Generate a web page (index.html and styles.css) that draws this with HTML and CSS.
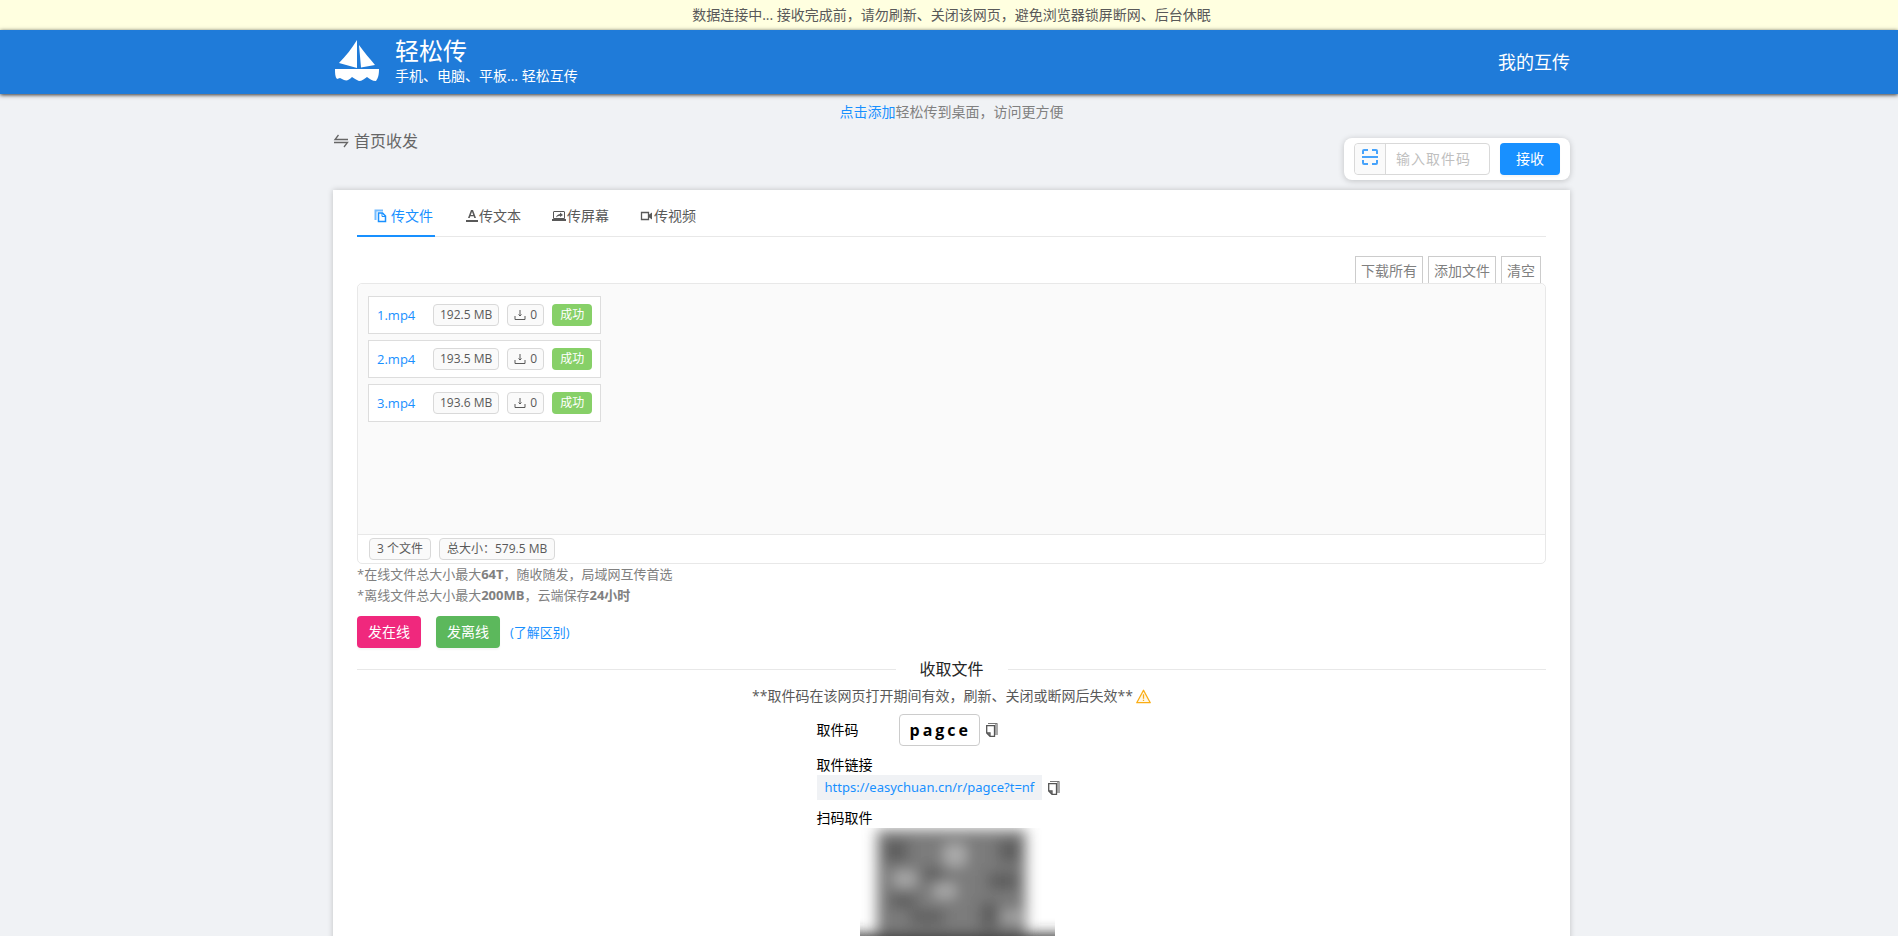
FILE: index.html
```html
<!DOCTYPE html>
<html lang="zh-CN">
<head>
<meta charset="utf-8">
<title>轻松传</title>
<link rel="stylesheet" href="styles.css">
</head>
<body>
<div class="banner">数据连接中... 接收完成前，请勿刷新、关闭该网页，避免浏览器锁屏断网、后台休眠</div>
<header class="header">
  <div class="container header-row">
    <a class="brand" href="#">
      <svg class="logo" viewBox="0 0 44 42" fill="#fff"><path d="M22 0V28L4 23C11 16 17 8 22 0ZM24 5C29 12 35 19 40 25L26 27.500ZM0 29H44C44 35 43 38 41 41C37 41 35 39 32 37C29 39 27 41 24 41C21 40 19 38 17 37C14 40 12 41 9 40L5 38L2 39C0 37 0 33 0 29Z"/></svg>
      <span class="brand-text"><span class="brand-name">轻松传</span><span class="brand-sub">手机、电脑、平板... 轻松互传</span></span>
    </a>
    <a class="mine" href="#">我的互传</a>
  </div>
</header>
<main class="main">
  <div class="container page">
    <p class="tip"><a href="#">点击添加</a>轻松传到桌面，访问更方便</p>
    <div class="top-row">
      <h1 class="page-title"><svg width="16" height="16" viewBox="0 0 16 16" fill="none" stroke="currentColor" stroke-width="1.300"><path d="M5.500 2L2 6.500H15M1 9.500H14.500L11 14"/></svg>首页收发</h1>
      <form class="pickup">
        <div class="pickup-group">
          <button class="scan" type="button" aria-label="扫码"><svg width="16" height="16" viewBox="0 0 16 16" fill="none" stroke="#47a3fb" stroke-width="2"><path d="M1 5V2Q1 1 2 1H6M10 1H14Q15 1 15 2V5M0 8H16M1 11V14Q1 15 2 15H6M10 15H14Q15 15 15 14V11"/></svg></button>
          <input class="code-input" type="text" placeholder="输入取件码" aria-label="输入取件码">
        </div>
        <button class="btn btn-blue" type="button">接收</button>
      </form>
    </div>
    <section class="card">
      <nav class="tabs">
        <a class="tab tab-active" href="#"><svg width="13" height="14" viewBox="0 0 13 14" fill="none" stroke="currentColor"><path d="M1.500 11V1.500H9" stroke-opacity=".6" stroke-width="2"/><path d="M4.500 4H8.500L11.500 7V12.500H4.500Z" stroke-width="1.500"/><path d="M8 4V7.500H11.500"/></svg>传文件</a>
        <a class="tab" href="#"><svg width="12" height="14" viewBox="0 0 12 14"><path fill="currentColor" fill-rule="evenodd" d="M0 11H12V13H0ZM5 1H7L10 9H8.300L7.700 7.200H4.300L3.700 9H2ZM6 2.700L4.800 6H7.200Z"/></svg>传文本</a>
        <a class="tab" href="#"><svg width="14" height="14" viewBox="0 0 14 14" fill="none" stroke="currentColor"><path d="M2 2.500H12Q12.500 2.500 12.500 3V9.500H1.500V3Q1.500 2.500 2 2.500Z"/><path d="M0 11H14" stroke-width="2"/><path fill="currentColor" stroke="none" d="M4 8.500Q4.500 5.500 8 5V3.500L11 6L8 8V6.700Q5.500 6.700 4 8.500Z"/></svg>传屏幕</a>
        <a class="tab" href="#"><svg width="13" height="14" viewBox="0 0 13 14"><path fill="none" stroke="currentColor" stroke-width="1.300" d="M1.500 3.500H8.500V10.500H1.500Z"/><path fill="currentColor" d="M8.500 6L12 3.500V10.500L8.500 8Z"/></svg>传视频</a>
      </nav>
      <div class="file-actions">
        <button type="button">下载所有</button><button type="button">添加文件</button><button type="button">清空</button>
      </div>
      <div class="file-box">
        <ul class="files">
          <li class="file"><a href="#">1.mp4</a><span class="tag">192.5 MB</span><span class="tag"><svg class="dl" width="12" height="12" viewBox="0 0 12 12"><path d="M6 1V7M4.500 5.500L6 7L7.500 5.500M1 7V10.500H11V7"/></svg>0</span><span class="tag tag-ok">成功</span></li>
          <li class="file"><a href="#">2.mp4</a><span class="tag">193.5 MB</span><span class="tag"><svg class="dl" width="12" height="12" viewBox="0 0 12 12"><path d="M6 1V7M4.500 5.500L6 7L7.500 5.500M1 7V10.500H11V7"/></svg>0</span><span class="tag tag-ok">成功</span></li>
          <li class="file"><a href="#">3.mp4</a><span class="tag">193.6 MB</span><span class="tag"><svg class="dl" width="12" height="12" viewBox="0 0 12 12"><path d="M6 1V7M4.500 5.500L6 7L7.500 5.500M1 7V10.500H11V7"/></svg>0</span><span class="tag tag-ok">成功</span></li>
        </ul>
        <div class="file-total"><span class="tag">3 个文件</span><span class="tag">总大小：579.5 MB</span></div>
      </div>
      <p class="note">*在线文件总大小最大<b>64T</b>，随收随发，局域网互传首选</p>
      <p class="note">*离线文件总大小最大<b>200MB</b>，云端保存<b>24小时</b></p>
      <div class="send-row">
        <button class="btn btn-pink" type="button">发在线</button>
        <button class="btn btn-green" type="button">发离线</button>
        <a class="diff" href="#">(了解区别)</a>
      </div>
      <h2 class="divider">收取文件</h2>
      <p class="warn">**取件码在该网页打开期间有效，刷新、关闭或断网后失效** <svg width="15" height="15" viewBox="0 0 14 14"><path d="M7 1.200L13.300 12.800H.7Z" fill="#fff7e6" stroke="#faad14" stroke-width="1.200" stroke-linejoin="round"/><path d="M7 5V9M7 10V11.200" stroke="#faad14" stroke-width="1.200"/></svg></p>
      <div class="receive">
        <div class="code-row"><span class="code-label">取件码</span><span class="code">pagce</span><button class="copy" type="button" aria-label="复制取件码"><svg width="12" height="14" viewBox="0 0 12 14"><path class="copy-edge" d="M2 .5H11.500"/><path class="copy-back" d="M9 1H12V12H9Z"/><path class="copy-page" d="M.7 2.700H8.500V13.300H4L.7 10ZM.7 10H4V13.300"/></svg></button></div>
        <span class="label">取件链接</span>
        <div class="link-row"><a class="link" href="#">https://easychuan.cn/r/pagce?t=nf</a><button class="copy" type="button" aria-label="复制取件链接"><svg width="12" height="14" viewBox="0 0 12 14"><path class="copy-edge" d="M2 .5H11.500"/><path class="copy-back" d="M9 1H12V12H9Z"/><path class="copy-page" d="M.7 2.700H8.500V13.300H4L.7 10ZM.7 10H4V13.300"/></svg></button></div>
        <span class="label label-qr">扫码取件</span>
        <svg class="qr" width="195" height="195" viewBox="0 0 195 195" role="img" aria-label="取件二维码">
          <defs><filter id="soft" x="-20%" y="-20%" width="140%" height="140%"><feGaussianBlur stdDeviation="7"/></filter></defs>
          <g filter="url(#soft)">
            <path fill="#7c7c7c" d="M17 2H166V195H17Z"/>
            <path fill="#383838" d="M24 12H48V34H24ZM138 12H160V34H138ZM128 44H158V62H128ZM62 40H84V52H62ZM30 66H56V80H30ZM50 82H84V96H50ZM120 74H138V100H120Z" opacity=".45"/>
            <path fill="#ddd" d="M84 16H106V38H84ZM34 44H56V58H34ZM74 56H96V70H74ZM142 84H162V94H142Z" opacity=".5"/>
            <path fill="#333" d="M-20 106H215V215H-20Z"/>
          </g>
        </svg>
      </div>
    </section>
  </div>
</main>
</body>
</html>
```
FILE: styles.css
```css
* { box-sizing: border-box; }
body {
  margin: 0;
  height: 100vh;
  overflow: hidden;
  background: #f0f2f5;
  color: #000;
  font: 14px/22px "Open Sans", "Noto Sans CJK SC", sans-serif;
}
a { color: #1890ff; text-decoration: none; }
p, h1, h2, ul { margin: 0; padding: 0; font-weight: 400; }
button, input { font: inherit; margin: 0; }
button { cursor: pointer; }
svg { flex: none; }

.banner {
  padding: 2px 0 2px 5px;
  background: #ffffe0;
  color: #595959;
  line-height: 26px;
  text-align: center;
}
.header {
  position: relative;
  padding-left: 5px;
  background: #1f7bd9;
  box-shadow: 0 1px 4px rgba(0, 0, 0, .8);
}
.container { width: 92%; max-width: 1237px; margin: 0 auto; }
.header-row { display: flex; justify-content: space-between; align-items: center; height: 64px; }
.brand { display: flex; align-items: center; gap: 16px; padding-left: 2px; color: #fff; }
.logo { width: 44px; height: 42px; margin-bottom: 3px; }
.brand-text { display: flex; flex-direction: column; }
.brand-name { font-size: 24px; line-height: 28px; }
.brand-sub { line-height: 22px; }
.mine { color: #fff; font-size: 18px; }

.main { padding-left: 5px; }
.tip { padding-top: 7px; color: #808080; text-align: center; }
.top-row { display: flex; justify-content: space-between; align-items: flex-start; height: 67px; padding-top: 7px; }
.page-title { display: flex; align-items: center; gap: 5px; color: #666; font-size: 16px; }
.pickup {
  display: flex;
  gap: 10px;
  margin-top: 8px;
  padding: 5px 10px;
  border-radius: 8px;
  background: #fff;
  box-shadow: 0 1px 6px rgba(0, 0, 0, .2);
}
.pickup-group { display: flex; width: 136px; height: 32px; border: 1px solid #d9d9d9; border-radius: 4px; }
.scan { width: 31px; padding: 0 0 5px; border: 0; border-right: 1px solid #d9d9d9; border-radius: 4px 0 0 4px; background: #fafafa; }
.scan svg { display: block; margin: 0 auto; }
.code-input { flex: 1; min-width: 0; padding: 0 10px; border: 0; background: none; letter-spacing: 1px; outline: 0; }
.code-input::placeholder { color: #bfbfbf; }
.btn { height: 32px; padding: 0 11px; border: 0; border-radius: 4px; color: #fff; box-shadow: 0 2px 2px rgba(0, 0, 0, .04); }
.btn-blue { padding: 0 16px; background: #1890ff; }
.btn-pink { background: #f0287d; }
.btn-green { background: #5cb85c; }

.card { min-height: 760px; padding: 0 24px; background: #fff; box-shadow: 0 0 6px rgba(0, 0, 0, .2); }
.tabs { display: flex; gap: 30px; height: 47px; border-bottom: 1px solid #e8e8e8; }
.tab { display: flex; align-items: center; gap: 1px; height: 47px; padding: 4px 0 0 1px; color: #595959; }
.tab-active { gap: 4px; padding: 6px 2px 0 17px; border-bottom: 2px solid #1890ff; color: #1890ff; }
.file-actions { display: flex; justify-content: flex-end; gap: 5px; padding: 19px 5px 0 0; }
.file-actions button { height: 27px; padding: 2px 5px 0; border: 1px solid #ccc; border-bottom: 0; background: #fff; color: #808080; }
.file-box { border: 1px solid #e8e8e8; border-radius: 5px; }
.files { height: 250px; padding: 12px 10px; background: #fafafa; list-style: none; border-radius: 5px 5px 0 0; }
.file { display: flex; align-items: center; gap: 8px; width: max-content; height: 38px; margin-bottom: 6px; padding: 0 8px; border: 1px solid #ddd; background: #fff; }
.file a { min-width: 48px; font-size: 13px; }
.tag { display: flex; align-items: center; gap: 4px; height: 22px; padding: 0 7px; border: 1px solid #d9d9d9; border-radius: 4px; background: #fafafa; color: #595959; font-size: 12px; line-height: 20px; }
.file .tag { padding: 0 6px; }
.file .tag-ok { padding: 0 8px; border: 0; background: #87d068; color: #fff; }
.dl { fill: none; stroke: #595959; }
.file-total { display: flex; gap: 8px; padding: 3px 11px; border-top: 1px solid #e8e8e8; }
.note { color: #808080; font-size: 13px; line-height: 21px; }
.send-row { display: flex; align-items: center; padding-top: 10px; }
.btn-green { margin-left: 15px; }
.diff { margin-left: 10px; font-size: 13px; }
.divider { display: flex; align-items: center; gap: 24px; margin-top: 9px; font-size: 16px; line-height: 24px; color: #262626; }
.divider::before, .divider::after { content: ""; flex: 1; height: 1px; background: #e8e8e8; }
.warn { display: flex; align-items: center; justify-content: center; gap: 3px; padding-top: 4px; color: #595959; }
.receive { width: 270px; margin: 7px auto 0; }
.code-row, .link-row { display: flex; align-items: center; }
.code-label { width: 82px; }
.code { padding: 0 8px 0 10px; border: 1px solid #ccc; border-radius: 4px; font-size: 16px; font-weight: 700; line-height: 30px; letter-spacing: 3px; }
.label { display: block; margin-top: 8px; line-height: 21px; }
.link { padding: 0 8px; background: #f0f2f5; font-family: "Noto Sans", sans-serif; font-size: 13px; line-height: 25px; }
.label-qr { line-height: 20px; }
.copy { display: flex; margin-left: 6px; padding: 0; border: 0; background: none; }
.copy-edge { stroke: #777; }
.copy-back { fill: #aaa; }
.copy-page { fill: #fff; stroke: #555; stroke-width: 1.3; }
.qr { display: block; margin-left: 43px; overflow: hidden; }
```
